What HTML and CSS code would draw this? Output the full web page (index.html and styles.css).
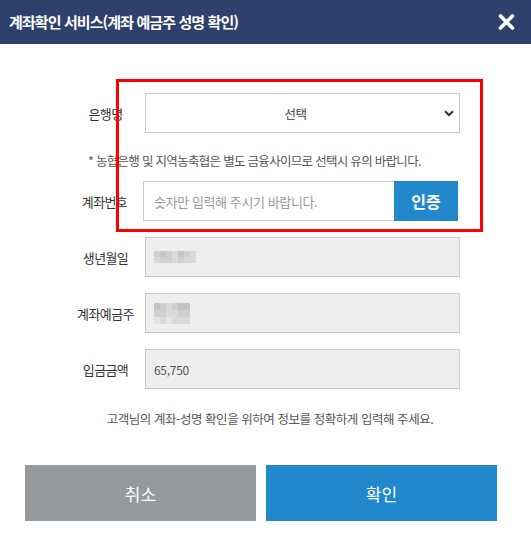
FILE: index.html
```html
<!DOCTYPE html>
<html lang="ko">
<head>
<meta charset="utf-8">
<link rel="stylesheet" href="styles.css">
</head>
<body>
<div class="modal">
  <div class="header">
    <h1 class="title">계좌확인 서비스(계좌 예금주 성명 확인)</h1>
    <svg class="close" width="17" height="16" viewBox="0 0 17 16"><path d="M2.5 2 L14.5 14 M14.5 2 L2.5 14" stroke="#fff" stroke-width="3.6" stroke-linecap="round"/></svg>
  </div>
  <div class="content">
    <div class="row">
      <div class="label">은행명</div>
      <div class="select">
        <span class="select-text">선택</span>
        <svg class="chev" width="10" height="7" viewBox="0 0 10 7"><path d="M1 1.2 L5 5 L9 1.2" stroke="#333" stroke-width="2" fill="none"/></svg>
      </div>
    </div>
    <p class="note">* 농협은행 및 지역농축협은 별도 금융사이므로 선택시 유의 바랍니다.</p>
    <div class="row row-acct">
      <div class="label label-acct">계좌번호</div>
      <div class="acct-input">숫자만 입력해 주시기 바랍니다.</div>
      <div class="verify">인증</div>
    </div>
    <div class="row">
      <div class="label">생년월일</div>
      <div class="field">
        <div class="mosaic m1">
          <i class="c2"></i><i class="c1"></i><i class="c2"></i><i class="c3"></i><i class="c1"></i><i class="c2"></i><i class="c3"></i>
          <i class="c3"></i><i class="c2"></i><i class="c2"></i><i class="c3"></i><i class="c2"></i><i class="c3"></i><i class="c3"></i>
        </div>
      </div>
    </div>
    <div class="row">
      <div class="label">계좌예금주</div>
      <div class="field">
        <div class="mosaic m2">
          <i class="c1"></i><i class="c2"></i><i class="c3"></i><i class="c2"></i><i class="c1"></i><i class="c1"></i>
          <i class="c2"></i><i class="c2"></i><i class="c3"></i><i class="c3"></i><i class="c2"></i><i class="c2"></i>
          <i class="c4"></i><i class="c3"></i><i class="c4"></i><i class="c3"></i><i class="c3"></i><i class="c3"></i>
        </div>
      </div>
    </div>
    <div class="row">
      <div class="label">입금금액</div>
      <div class="field"><span class="amount">65,750</span></div>
    </div>
    <p class="message">고객님의 계좌-성명 확인을 위하여 정보를 정확하게 입력해 주세요.</p>
    <div class="buttons">
      <div class="btn btn-cancel">취소</div>
      <div class="btn btn-ok">확인</div>
    </div>
  </div>
  <div class="highlight"></div>
</div>
</body>
</html>
```
FILE: styles.css
```css
html, body {
  margin: 0;
  padding: 0;
  background: #fff;
}
body {
  font-family: "Noto Sans CJK KR", "Noto Sans", sans-serif;
  color: #333;
}
.modal {
  position: relative;
  width: 531px;
  height: 543px;
  overflow: hidden;
}
.header {
  height: 44px;
  background: #2e406c;
  display: flex;
  align-items: center;
  justify-content: space-between;
  padding: 0 16px 0 9px;
}
.title {
  margin: 0;
  color: #fff;
  font-size: 15px;
  font-weight: 700;
  letter-spacing: -0.9px;
  line-height: 20px;
}
.close {
  display: block;
}
.content {
  padding-top: 49px;
}
.row {
  display: flex;
  align-items: center;
  height: 40px;
  margin-left: 66px;
  margin-bottom: 16px;
}
.label {
  width: 79px;
  text-align: center;
  font-size: 13px;
  letter-spacing: -0.6px;
  color: #333;
}
.label-acct {
  width: 77px;
}
.select {
  box-sizing: border-box;
  width: 315px;
  height: 40px;
  border: 1px solid #c9c9c9;
  display: flex;
  align-items: center;
  justify-content: center;
  position: relative;
  background: #fff;
}
.select-text {
  font-size: 12.5px;
  color: #444;
  letter-spacing: -0.5px;
  margin-left: -14px;
}
.chev {
  position: absolute;
  right: 5px;
  top: 16px;
}
.note {
  margin: 20px 0 12px 88px;
  font-size: 12.5px;
  line-height: 16px;
  color: #555;
  letter-spacing: -0.7px;
}
.acct-input {
  box-sizing: border-box;
  width: 251px;
  height: 40px;
  border: 1px solid #c9c9c9;
  border-right: none;
  display: flex;
  align-items: center;
  padding-left: 10px;
  font-size: 13px;
  color: #999;
  letter-spacing: -0.4px;
}
.verify {
  width: 64px;
  height: 40px;
  background: #2288cc;
  color: #fff;
  font-size: 16px;
  font-weight: 700;
  display: flex;
  align-items: center;
  justify-content: center;
}
.field {
  box-sizing: border-box;
  width: 315px;
  height: 40px;
  border: 1px solid #c9c9c9;
  background: #eeeeee;
  display: flex;
  align-items: center;
  padding-left: 8px;
}
.amount {
  font-size: 12px;
  color: #555;
  letter-spacing: -0.3px;
}
.mosaic {
  display: grid;
  grid-auto-rows: 6px;
}
.mosaic i {
  display: block;
}
.m1 {
  grid-template-columns: repeat(7, 6px);
}
.m2 {
  grid-template-columns: repeat(6, 6px);
  grid-auto-rows: 7px;
}
.c1 { background: #c4c4c4; }
.c2 { background: #cfcfcf; }
.c3 { background: #d9d9d9; }
.c4 { background: #e4e4e4; }
.message {
  margin: 22px 0 38px 0;
  text-align: center;
  padding-left: 9px;
  font-size: 12.5px;
  line-height: 16px;
  color: #555;
  letter-spacing: -0.45px;
}
.buttons {
  display: flex;
  gap: 10px;
  padding-left: 25px;
}
.btn {
  width: 231px;
  height: 56px;
  display: flex;
  align-items: center;
  justify-content: center;
  color: #fff;
  font-size: 17px;
}
.btn-cancel {
  background: #95999c;
}
.btn-ok {
  background: #2288cc;
}
.highlight {
  position: absolute;
  left: 116px;
  top: 79px;
  width: 361px;
  height: 147px;
  border: 3px solid #ff0000;
  pointer-events: none;
}
```
